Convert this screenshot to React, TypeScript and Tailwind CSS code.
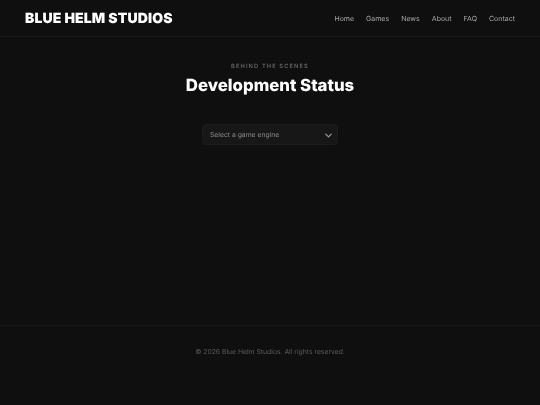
import { ChevronDown } from "lucide-react";

const NAV_LINKS = ["Home", "Games", "News", "About", "FAQ", "Contact"];

export default function App() {
  return (
    <div className="flex min-h-[405px] flex-col bg-[#0f0f0f] font-['Inter',sans-serif] [text-rendering:geometricPrecision] will-change-transform">
      <header className="flex h-[37px] items-center justify-between border-b border-[#171717] px-[25px]">
        <span className="text-[14px] font-black tracking-[0.01em] text-white">
          BLUE HELM STUDIOS
        </span>
        <nav className="flex gap-[12px] pt-[2px]">
          {NAV_LINKS.map((link) => (
            <a key={link} className="text-[7px] text-[#a8a8a8]">
              {link}
            </a>
          ))}
        </nav>
      </header>

      <main className="flex h-[288px] flex-col items-center pt-[25px]">
        <p className="text-[5.7px] leading-[9px] font-semibold tracking-[0.2em] text-[#666666]">
          BEHIND THE SCENES
        </p>
        <h1 className="mt-[2px] text-[16.8px] leading-[26px] font-extrabold text-white">
          Development Status
        </h1>
        <div className="mt-[25px] flex h-[21px] w-[136px] items-center justify-between rounded-[4px] border border-[#1c1c1c] bg-[#171717] pl-[7px] pr-[3px]">
          <span className="pt-px text-[6.8px] text-[#8a8a8a]">Select a game engine</span>
          <ChevronDown size={11} strokeWidth={2.5} className="mt-px text-[#a1a1a1]" />
        </div>
      </main>

      <footer className="flex flex-1 justify-center border-t border-[#171717] pt-[20px]">
        <p className="text-[6.8px] leading-[11px] text-[#5c5c5c]">
          © 2026 Blue Helm Studios. All rights reserved.
        </p>
      </footer>
    </div>
  );
}
